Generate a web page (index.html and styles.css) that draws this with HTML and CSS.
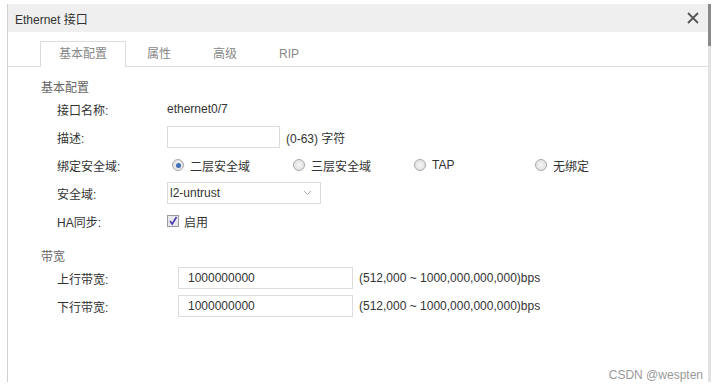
FILE: index.html
```html
<!DOCTYPE html>
<html lang="zh-CN">
<head>
    <meta charset="UTF-8">
    <title>Ethernet 接口</title>
    <link rel="stylesheet" href="styles.css">
</head>
<body>
    <div class="dialog">
        <div class="dialog-head">
            <span class="dialog-title">Ethernet 接口</span>
            <svg class="close" width="12" height="12" viewBox="0 0 12 12">
                <path d="M1 1 L11 11 M11 1 L1 11" stroke="#555" stroke-width="1.8" fill="none"/>
            </svg>
        </div>
        <div class="scroll-thumb"></div>
        <div class="tabs">
            <div class="tab active">基本配置</div>
            <div class="tab">属性</div>
            <div class="tab">高级</div>
            <div class="tab">RIP</div>
        </div>
        <div class="content">
            <div class="section-title">基本配置</div>
            <div class="row">
                <div class="label">接口名称:</div>
                <div class="value">ethernet0/7</div>
            </div>
            <div class="row">
                <div class="label">描述:</div>
                <input class="text desc" type="text">
                <span class="hint">(0-63) 字符</span>
            </div>
            <div class="row">
                <div class="label">绑定安全域:</div>
                <div class="radio-opt"><span class="radio checked"></span>二层安全域</div>
                <div class="radio-opt"><span class="radio"></span>三层安全域</div>
                <div class="radio-opt"><span class="radio"></span>TAP</div>
                <div class="radio-opt"><span class="radio"></span>无绑定</div>
            </div>
            <div class="row">
                <div class="label">安全域:</div>
                <div class="select">
                    <span>l2-untrust</span>
                    <svg width="9" height="6" viewBox="0 0 9 6">
                        <path d="M1 1 L4.5 4.5 L8 1" stroke="#aaa" stroke-width="1" fill="none"/>
                    </svg>
                </div>
            </div>
            <div class="row">
                <div class="label">HA同步:</div>
                <span class="checkbox">
                    <svg width="10" height="10" viewBox="0 0 10 10">
                        <path d="M2 5 L4.2 8 L8.5 1" stroke="#4a3fb0" stroke-width="1.6" fill="none"/>
                    </svg>
                </span>
                <span class="check-label">启用</span>
            </div>

            <div class="section-title bw">带宽</div>
            <div class="row">
                <div class="label wide">上行带宽:</div>
                <input class="text bw-input" type="text" value="1000000000">
                <span class="hint">(512,000 ~ 1000,000,000,000)bps</span>
            </div>
            <div class="row">
                <div class="label wide">下行带宽:</div>
                <input class="text bw-input" type="text" value="1000000000">
                <span class="hint">(512,000 ~ 1000,000,000,000)bps</span>
            </div>
        </div>
    </div>
    <div class="watermark">CSDN @wespten</div>
</body>
</html>
```

FILE: styles.css
```css
body {
    margin: 0;
    background: #fff;
    font-family: "Liberation Sans", "Noto Sans CJK SC", sans-serif;
    font-size: 12px;
    color: #333;
    position: relative;
    height: 392px;
    overflow: hidden;
}
.dialog {
    position: relative;
    margin: 4px 0 0 7px;
    width: 700px;
    height: 378px;
    border-left: 1px solid #cfcfcf;
    border-right: 3px solid #e2e2e2;
    background: #fff;
}
.dialog-head {
    height: 28px;
    background: #efefef;
    display: flex;
    align-items: center;
    justify-content: space-between;
    padding: 0 9px 0 7px;
}
.dialog-title {
    color: #333;
    font-size: 12px;
}
.scroll-thumb {
    position: absolute;
    right: -3px;
    top: 0;
    width: 3px;
    height: 42px;
    background: #8a8a8a;
}
.tabs {
    display: flex;
    padding: 9px 0 0 32px;
    border-bottom: 1px solid #dcdcdc;
}
.tab {
    height: 24px;
    line-height: 24px;
    padding: 0 20px;
    color: #888;
    border: 1px solid transparent;
    border-bottom: none;
}
.tab.active {
    padding: 0 18px;
    border-color: #dcdcdc;
    background: #fff;
    margin-bottom: -1px;
    height: 25px;
}
.content {
    padding: 14px 0 0 33px;
}
.section-title {
    line-height: 14px;
    color: #666;
}
.section-title.bw {
    margin-top: 15px;
}
.row {
    display: flex;
    align-items: center;
    height: 28px;
    padding-left: 16px;
}
.label {
    width: 110px;
    color: #333;
}
.label.wide {
    width: 121px;
}
.text {
    box-sizing: border-box;
    height: 22px;
    border: 1px solid #dcdcdc;
    padding: 0 9px;
    font-family: inherit;
    font-size: 12px;
    color: #333;
    outline: none;
}
.desc {
    width: 113px;
}
.bw-input {
    width: 175px;
}
.hint {
    margin-left: 6px;
    color: #333;
}
.radio-opt {
    width: 121px;
    display: flex;
    align-items: center;
    color: #333;
}
.radio {
    box-sizing: border-box;
    width: 12px;
    height: 12px;
    border-radius: 50%;
    border: 1px solid #a9a9a9;
    background: radial-gradient(circle, #f4f4f4 0%, #dcdcdc 100%);
    margin: 0 6px 0 5px;
    position: relative;
}
.radio.checked::after {
    content: "";
    position: absolute;
    left: 2.5px;
    top: 2.5px;
    width: 5px;
    height: 5px;
    border-radius: 50%;
    background: #3f6fb5;
}
.select {
    box-sizing: border-box;
    width: 154px;
    height: 22px;
    border: 1px solid #dcdcdc;
    display: flex;
    align-items: center;
    justify-content: space-between;
    padding: 0 8px 0 2px;
}
.checkbox {
    box-sizing: border-box;
    width: 12px;
    height: 12px;
    border: 1px solid #9a9a9a;
    background: #e8e8ee;
    display: flex;
    align-items: center;
    justify-content: center;
}
.check-label {
    margin-left: 5px;
}
.watermark {
    position: absolute;
    right: 16px;
    top: 368px;
    color: #999;
    font-size: 12px;
}
```
